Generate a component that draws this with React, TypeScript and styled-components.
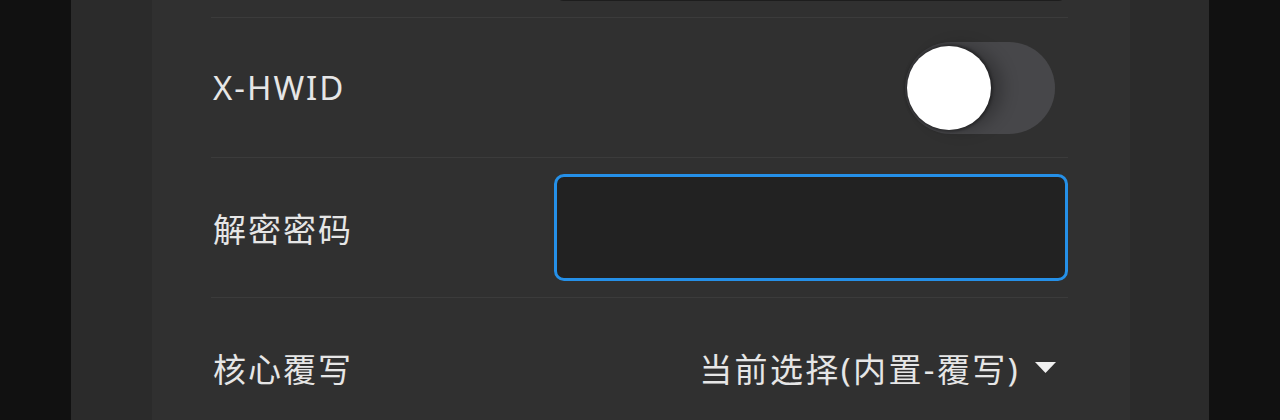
import React, { useState } from 'react';
import styled, { createGlobalStyle } from 'styled-components';

const GlobalStyle = createGlobalStyle`
  html, body {
    margin: 0;
    padding: 0;
    background: #111111;
  }
  body {
    font-family: "Noto Sans", "Noto Sans CJK SC", sans-serif;
    color: #e4e4e4;
  }
`;

const Screen = styled.div`
  height: 420px;
  overflow: hidden;
  padding: 0 71px;
  background: #111111;
`;

const Panel = styled.div`
  height: 100%;
  padding: 0 79px 0 81px;
  background: #2b2b2b;
`;

const Card = styled.div`
  height: 100%;
  overflow: hidden;
  padding: 0 62px 0 59px;
  background: #303030;
`;

// the list is scrolled: only the bottom edge of the first row is visible
const List = styled.div`
  display: flex;
  flex-direction: column;
  margin-top: -122px;
`;

const Row = styled.div`
  display: flex;
  align-items: center;
  justify-content: space-between;
  height: 139px;
  border-bottom: 1px solid #3b3b3b;
`;

const Label = styled.span`
  padding-left: 2px;
  font-size: 33px;
  letter-spacing: 2px;
  color: #e6e6e6;
`;

const TextField = styled.input<{ $focused?: boolean }>`
  box-sizing: border-box;
  width: 514px;
  height: 107px;
  padding: 0 24px;
  border: 3px solid ${p => (p.$focused ? '#2590e8' : '#1d1d1d')};
  border-radius: 10px;
  outline: none;
  background: #222222;
  color: #e4e4e4;
  font: inherit;
  font-size: 30px;
`;

const Track = styled.button<{ $on: boolean }>`
  display: flex;
  align-items: center;
  justify-content: ${p => (p.$on ? 'flex-end' : 'flex-start')};
  box-sizing: border-box;
  width: 150px;
  height: 92px;
  margin-right: 13px;
  padding: 0 2px;
  border: none;
  border-radius: 46px;
  background: ${p => (p.$on ? '#2590e8' : '#47474a')};
  cursor: pointer;
`;

const Knob = styled.span`
  width: 84px;
  height: 84px;
  border-radius: 50%;
  background: #ffffff;
  box-shadow: 0 0 3px 2px rgba(0, 0, 0, 0.35), 12px 0 16px rgba(0, 0, 0, 0.25);
`;

const Select = styled.button`
  display: flex;
  align-items: center;
  gap: 15px;
  margin-right: 12px;
  padding: 0;
  border: none;
  background: transparent;
  color: #e6e6e6;
  font: inherit;
  font-size: 33px;
  letter-spacing: 2.4px;
  cursor: pointer;
`;

const Caret = () => (
  <svg width="21" height="11" viewBox="0 0 21 11">
    <polygon points="0,0 21,0 10.5,11" fill="#f0f0f0" />
  </svg>
);

export default function App() {
  const [hwid, setHwid] = useState(false);

  return (
    <>
      <GlobalStyle />
      <Screen>
        <Panel>
          <Card>
            <List>
              <Row>
                <Label />
                <TextField type="text" />
              </Row>
              <Row>
                <Label>X-HWID</Label>
                <Track $on={hwid} onClick={() => setHwid(!hwid)}>
                  <Knob />
                </Track>
              </Row>
              <Row>
                <Label>解密密码</Label>
                <TextField type="password" $focused />
              </Row>
              <Row>
                <Label>核心覆写</Label>
                <Select>
                  当前选择(内置-覆写)
                  <Caret />
                </Select>
              </Row>
            </List>
          </Card>
        </Panel>
      </Screen>
    </>
  );
}
